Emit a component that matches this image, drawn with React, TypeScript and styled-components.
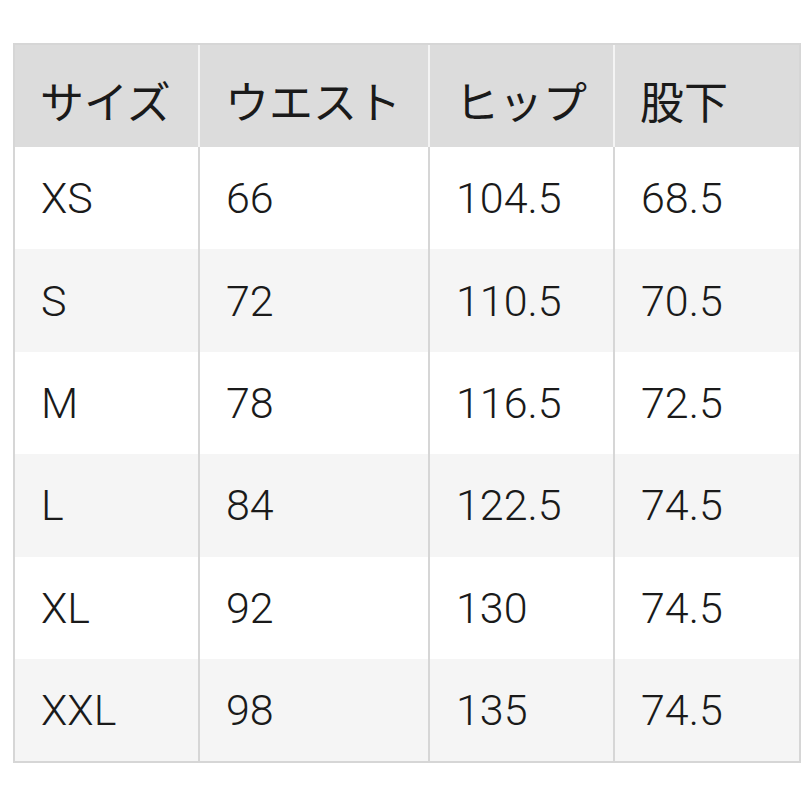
import React from 'react'
import styled, {createGlobalStyle} from 'styled-components'

const GlobalStyle = createGlobalStyle`
  html, body {
    margin: 0;
    padding: 0;
    background: #ffffff;
  }
`

const HEADERS = ['サイズ', 'ウエスト', 'ヒップ', '股下']

const ROWS: string[][] = [
  ['XS', '66', '104.5', '68.5'],
  ['S', '72', '110.5', '70.5'],
  ['M', '78', '116.5', '72.5'],
  ['L', '84', '122.5', '74.5'],
  ['XL', '92', '130', '74.5'],
  ['XXL', '98', '135', '74.5'],
]

const COLUMN_WIDTHS = [185, 230, 185, 184]

export default function App() {
  return (
    <>
      <GlobalStyle />
      <Page>
        <SizeTable>
          <colgroup>
            {COLUMN_WIDTHS.map((w, i) => (
              <col key={i} style={{width: w}} />
            ))}
          </colgroup>
          <thead>
            <tr>
              {HEADERS.map((h) => (
                <HeadCell key={h}>{h}</HeadCell>
              ))}
            </tr>
          </thead>
          <tbody>
            {ROWS.map((row, index) => (
              <Row key={row[0]} striped={index % 2 === 1}>
                {row.map((value, i) => (
                  <Cell key={i}>{value}</Cell>
                ))}
              </Row>
            ))}
          </tbody>
        </SizeTable>
      </Page>
    </>
  )
}

const Page = styled.div`
  padding: 43px 0 0 13px;
`

const SizeTable = styled.table`
  width: 786px;
  table-layout: fixed;
  border-collapse: separate;
  border-spacing: 0;
  border: 2px solid #d6d6d6;
  color: #1a1a1a;
`

const HeadCell = styled.th`
  height: 102px;
  padding: 8px 0 0 25px;
  box-sizing: border-box;
  background: #dcdcdc;
  text-align: left;
  font-family: 'Noto Sans CJK JP', sans-serif;
  font-size: 44px;
  font-weight: 400;
  border-right: 2px solid #f4f4f4;

  &:last-child {
    border-right: none;
  }
`

const Row = styled.tr<{striped: boolean}>`
  background: ${(props) => (props.striped ? '#f5f5f5' : '#ffffff')};
`

const Cell = styled.td`
  height: 102.4px;
  padding: 0 0 0 26px;
  box-sizing: border-box;
  font-family: Roboto, 'Liberation Sans', sans-serif;
  font-size: 43px;
  font-weight: 300;
  border-right: 2px solid #d6d6d6;

  &:last-child {
    border-right: none;
  }
`
